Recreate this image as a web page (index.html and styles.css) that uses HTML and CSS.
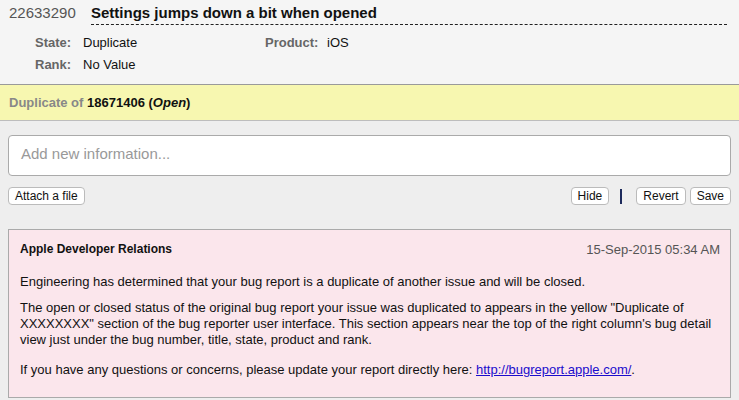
FILE: index.html
```html
<!DOCTYPE html>
<html lang="en">
<head>
  <meta charset="UTF-8" />
  <title>Bug 22633290</title>
  <meta name="viewport" content="width=device-width, initial-scale=1.0" />
  <link rel="stylesheet" href="styles.css">
</head>
<body>

  <!-- Bug header -->
  <header class="bug-head">
    <div class="title-row">
      <span class="bug-id">22633290</span>
      <h1 class="bug-title">Settings jumps down a bit when opened</h1>
    </div>
    <div class="meta">
      <span class="label">State:</span><span class="value">Duplicate</span>
      <span class="label">Product:</span><span class="value">iOS</span>
      <span class="label">Rank:</span><span class="value">No Value</span>
    </div>
  </header>

  <div class="dup-bar">
    <span class="dup-label">Duplicate of</span> <b>18671406</b> <b>(<i>Open</i>)</b>
  </div>

  <main>
    <div class="new-info">Add new information...</div>

    <div class="actions">
      <button>Attach a file</button>
      <div class="right-actions">
        <button>Hide</button>
        <span class="divider"></span>
        <button>Revert</button>
        <button>Save</button>
      </div>
    </div>

    <div class="note">
      <div class="note-head">
        <span class="author">Apple Developer Relations</span>
        <span class="date">15-Sep-2015 05:34 AM</span>
      </div>
      <p>Engineering has determined that your bug report is a duplicate of another issue and will be closed.</p>
      <p>The open or closed status of the original bug report your issue was duplicated to appears in the yellow "Duplicate of XXXXXXXX" section of the bug reporter user interface. This section appears near the top of the right column's bug detail view just under the bug number, title, state, product and rank.</p>
      <p class="last">If you have any questions or concerns, please update your report directly here: <a href="#">http://bugreport.apple.com/</a>.</p>
    </div>
  </main>

</body>
</html>
```

FILE: styles.css
```css
body {
  font-family: "Liberation Sans", Arial, sans-serif;
  background-color: #eeeeee;
  color: #111;
  margin: 0;
  padding: 0;
}

.bug-head {
  background-color: #f5f5f5;
  border-bottom: 1px solid #9a9a9a;
  padding: 4px 9px 8px;
  height: 72px;
}

.title-row {
  display: flex;
  align-items: baseline;
}

.bug-id {
  color: #555;
  font-size: 15px;
  width: 82px;
}

.bug-title {
  flex: 1;
  margin: 0;
  font-size: 15px;
  font-weight: bold;
  padding-bottom: 3px;
  border-bottom: 1px dashed #222;
  margin-right: 3px;
}

.meta {
  display: grid;
  grid-template-columns: 48px 182px 62px 1fr;
  row-gap: 7px;
  margin-top: 10px;
  padding-left: 26px;
  font-size: 13px;
}

.meta .label {
  color: #666;
  font-weight: bold;
}

.meta .value {
  color: #111;
}

.dup-bar {
  background-color: #f7f7b0;
  border-bottom: 1px solid #bdbdbd;
  font-size: 13px;
  padding: 10px 9px 10px;
  height: 15px;
}

.dup-label {
  color: #888;
  font-weight: bold;
}

main {
  padding: 14px 8px;
}

.new-info {
  background: white;
  border: 1px solid #aaa;
  border-radius: 4px;
  height: 35px;
  line-height: 35px;
  padding: 0 0 4px 12px;
  color: #999;
  font-size: 15px;
}

.actions {
  display: flex;
  justify-content: space-between;
  align-items: center;
  margin-top: 11px;
  margin-bottom: 24px;
}

.right-actions {
  display: flex;
  align-items: center;
  gap: 4px;
}

button {
  font-family: "Liberation Sans", Arial, sans-serif;
  font-size: 12px;
  color: #111;
  background: white;
  border: 1px solid #bbb;
  border-radius: 4px;
  padding: 2px 6px;
  height: 18px;
  line-height: 12px;
}

.divider {
  width: 2px;
  height: 15px;
  background-color: #1d2a5c;
  margin: 0 10px 0 7px;
}

.note {
  background-color: #fbe6ec;
  border: 1px solid #aaa;
  padding: 12px 10px 19px 11px;
  font-size: 13px;
}

.note-head {
  display: flex;
  justify-content: space-between;
  font-size: 12px;
  margin-bottom: 17px;
}

.author {
  font-weight: bold;
}

.date {
  color: #555;
  font-size: 13px;
}

.note p {
  margin: 0 0 10px;
  line-height: 16px;
}

.note p.last {
  margin-top: 14px;
  margin-bottom: 0;
}

.note a {
  color: #1a0dcc;
}
```
